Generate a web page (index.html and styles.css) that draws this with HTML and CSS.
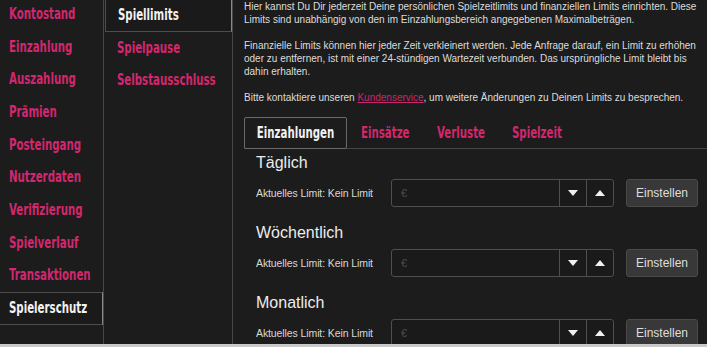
FILE: index.html
```html
<!DOCTYPE html>
<html lang="de">
  <head>
    <meta charset="utf-8" />
    <title>Spielerschutz – Spiellimits</title>
    <link rel="stylesheet" href="styles.css">
  </head>

  <body>
    <div class="layout">
      <nav class="main-nav">
        <ul>
          <li><a href="#"><span>Kontostand</span></a></li>
          <li><a href="#"><span>Einzahlung</span></a></li>
          <li><a href="#"><span>Auszahlung</span></a></li>
          <li><a href="#"><span>Prämien</span></a></li>
          <li><a href="#"><span>Posteingang</span></a></li>
          <li><a href="#"><span>Nutzerdaten</span></a></li>
          <li><a href="#"><span>Verifizierung</span></a></li>
          <li><a href="#"><span>Spielverlauf</span></a></li>
          <li><a href="#"><span>Transaktionen</span></a></li>
          <li class="active"><a href="#"><span>Spielerschutz</span></a></li>
        </ul>
      </nav>

      <nav class="sub-nav">
        <ul>
          <li class="active"><a href="#"><span>Spiellimits</span></a></li>
          <li><a href="#"><span>Spielpause</span></a></li>
          <li><a href="#"><span>Selbstausschluss</span></a></li>
        </ul>
      </nav>

      <main class="content">
        <p>
          Hier kannst Du Dir jederzeit Deine persönlichen Spielzeitlimits und finanziellen Limits einrichten. Diese<br>
          Limits sind unabhängig von den im Einzahlungsbereich angegebenen Maximalbeträgen.
        </p>
        <p>
          Finanzielle Limits können hier jeder Zeit verkleinert werden. Jede Anfrage darauf, ein Limit zu erhöhen<br>
          oder zu entfernen, ist mit einer 24-stündigen Wartezeit verbunden. Das ursprüngliche Limit bleibt bis<br>
          dahin erhalten.
        </p>
        <p>
          Bitte kontaktiere unseren <a href="#">Kundenservice</a>, um weitere Änderungen zu Deinen Limits zu besprechen.
        </p>

        <ul class="tabs">
          <li class="active"><a href="#"><span>Einzahlungen</span></a></li>
          <li><a href="#"><span>Einsätze</span></a></li>
          <li><a href="#"><span>Verluste</span></a></li>
          <li><a href="#"><span>Spielzeit</span></a></li>
        </ul>

        <section class="limit">
          <h2>Täglich</h2>
          <div class="limit-row">
            <span class="current">Aktuelles Limit: Kein Limit</span>
            <div class="amount">
              <input type="text" placeholder="€" />
              <button class="step" type="button" aria-label="weniger">
                <svg width="10" height="6" viewBox="0 0 10 6"><path d="M0 0h10L5 6z" /></svg>
              </button>
              <button class="step" type="button" aria-label="mehr">
                <svg width="10" height="6" viewBox="0 0 10 6"><path d="M0 6h10L5 0z" /></svg>
              </button>
            </div>
            <button class="submit" type="button">Einstellen</button>
          </div>
        </section>

        <section class="limit">
          <h2>Wöchentlich</h2>
          <div class="limit-row">
            <span class="current">Aktuelles Limit: Kein Limit</span>
            <div class="amount">
              <input type="text" placeholder="€" />
              <button class="step" type="button" aria-label="weniger">
                <svg width="10" height="6" viewBox="0 0 10 6"><path d="M0 0h10L5 6z" /></svg>
              </button>
              <button class="step" type="button" aria-label="mehr">
                <svg width="10" height="6" viewBox="0 0 10 6"><path d="M0 6h10L5 0z" /></svg>
              </button>
            </div>
            <button class="submit" type="button">Einstellen</button>
          </div>
        </section>

        <section class="limit">
          <h2>Monatlich</h2>
          <div class="limit-row">
            <span class="current">Aktuelles Limit: Kein Limit</span>
            <div class="amount">
              <input type="text" placeholder="€" />
              <button class="step" type="button" aria-label="weniger">
                <svg width="10" height="6" viewBox="0 0 10 6"><path d="M0 0h10L5 6z" /></svg>
              </button>
              <button class="step" type="button" aria-label="mehr">
                <svg width="10" height="6" viewBox="0 0 10 6"><path d="M0 6h10L5 0z" /></svg>
              </button>
            </div>
            <button class="submit" type="button">Einstellen</button>
          </div>
        </section>
      </main>
    </div>
    <div class="page-end"></div>
  </body>
</html>
```

FILE: styles.css
```css
html {
  font-family: "Liberation Sans", Arial, sans-serif;
}

body {
  margin: 0;
  background: #1c1c1c;
  color: #dcdcdc;
  height: 347px;
  overflow: hidden;
}

ul {
  list-style: none;
  margin: 0;
  padding: 0;
}

a {
  text-decoration: none;
}

.layout {
  display: flex;
  height: 344px;
  overflow: hidden;
}

.page-end {
  height: 3px;
  background: #c9c9c9;
}

/* condensed display type for menus and tabs */
.main-nav,
.sub-nav,
.tabs {
  font-family: "DejaVu Sans Condensed", "DejaVu Sans", sans-serif;
  font-weight: bold;
  font-size: 16px;
}
.main-nav span,
.sub-nav span,
.tabs span {
  display: inline-block;
  white-space: nowrap;
  transform: scaleX(0.71);
  transform-origin: left center;
}

/* navigation columns */
.main-nav li a,
.sub-nav li a {
  display: block;
  height: 32.67px;
  line-height: 32.67px;
  color: #d3276f;
  box-sizing: border-box;
  white-space: nowrap;
}
.main-nav li.active a,
.sub-nav li.active a {
  color: #f2f2f2;
  background: #1a1a1a;
  border: 1px solid #4d4d4d;
  border-right-color: #8a8a8a;
  line-height: 30.67px;
}

.main-nav {
  width: 103px;
  flex: none;
  border-right: 1px solid #474747;
}
.main-nav ul {
  margin-top: -2px;
}
.main-nav li a {
  padding-left: 9px;
}
.main-nav li.active a {
  padding-left: 9px;
  border-left: 0;
}

.sub-nav {
  width: 128px;
  flex: none;
  border-right: 1px solid #474747;
}
.sub-nav ul {
  margin-top: -1px;
}
.sub-nav li a {
  padding-left: 13px;
}
.sub-nav li.active a {
  margin-left: 1px;
  padding-left: 12px;
  border-top-color: #3a3a3a;
}

/* content */
.content {
  flex: 1;
  min-width: 0;
  padding-left: 11px;
  font-size: 10px;
  line-height: 13px;
}
.content p {
  margin: 0 0 13px;
  white-space: nowrap;
}
.content p a {
  color: #c8286c;
  text-decoration: underline;
}

.tabs {
  display: flex;
  margin-top: 12px;
  margin-bottom: 4px;
  border-bottom: 1px solid #464646;
}
.tabs li a {
  display: block;
  width: 76px;
  height: 31px;
  line-height: 31px;
  padding-left: 14px;
  color: #d3276f;
  box-sizing: border-box;
  overflow: visible;
}
.tabs li:nth-child(4) a {
  padding-left: 13px;
}
.tabs li.active a {
  display: flex;
  justify-content: center;
  width: 103px;
  padding: 0;
  color: #f2f2f2;
  border: 1px solid #6a6a6a;
  border-radius: 2px;
  margin-bottom: -1px;
  height: 32px;
  line-height: 30px;
}
.tabs li.active span {
  transform-origin: center;
}

.limit {
  padding-left: 12px;
  height: 70px;
}
.limit h2 {
  margin: 0 0 6px;
  font-size: 16px;
  line-height: 20px;
  font-weight: normal;
  color: #ececec;
}

.limit-row {
  display: flex;
  align-items: center;
}
.current {
  width: 135px;
  flex: none;
  font-size: 10.5px;
  letter-spacing: -0.1px;
  color: #d8d8d8;
  white-space: nowrap;
}

.amount {
  display: flex;
  width: 223px;
  height: 28px;
  box-sizing: border-box;
  border: 1px solid #4f4f4f;
  border-radius: 3px;
  background: #1a1a1a;
}
.amount input {
  flex: 1;
  min-width: 0;
  border: 0;
  margin: 0;
  padding: 0 0 0 9px;
  background: transparent;
  color: #ddd;
  font: inherit;
  font-size: 11px;
  outline: none;
}
.amount input::placeholder {
  color: #4e4e4e;
}
.step {
  width: 27px;
  flex: none;
  border: 0;
  border-left: 1px solid #4f4f4f;
  background: transparent;
  padding: 0;
  display: flex;
  align-items: center;
  justify-content: center;
}
.step svg {
  fill: #f0f0f0;
}

.submit {
  margin-left: 12px;
  width: 72px;
  height: 28px;
  border: 1px solid #4a4a4a;
  border-radius: 3px;
  background: #383838;
  color: #dedede;
  font: inherit;
  font-size: 12px;
  padding: 0;
}
```
